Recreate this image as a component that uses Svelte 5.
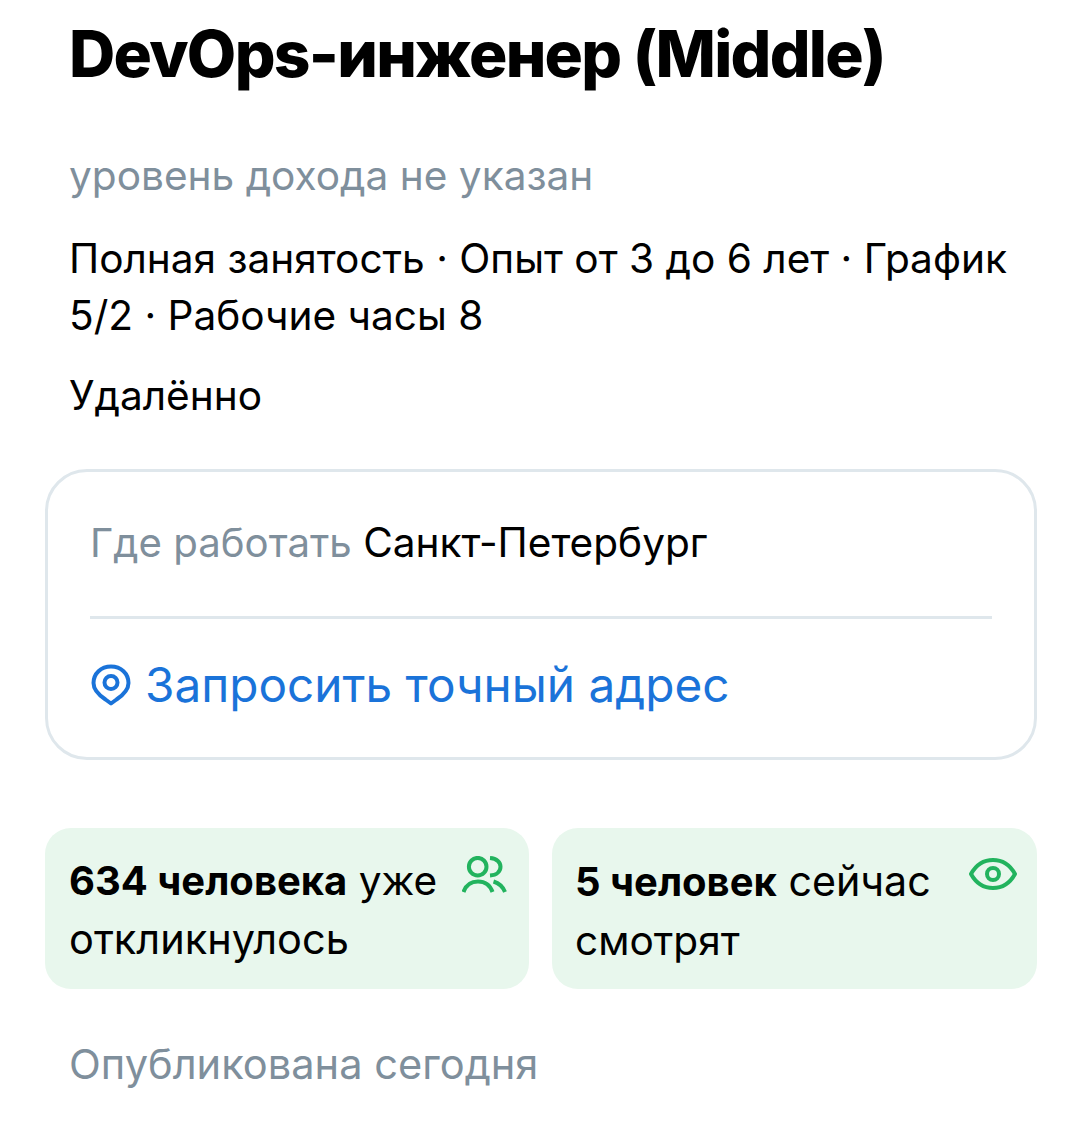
<script>
  const stats = [
    { strong: '634 человека', rest: ' уже', line2: 'откликнулось', icon: 'people' },
    { strong: '5 человек', rest: ' сейчас', line2: 'смотрят', icon: 'eye' }
  ];
</script>

<main class="page">
  <div class="inset">
    <h1>DevOps-инженер (Middle)</h1>
    <p class="salary">уровень дохода не указан</p>
    <p class="terms">Полная занятость · Опыт от 3 до 6 лет · График<br />5/2 · Рабочие часы 8</p>
    <p class="remote">Удалённо</p>
  </div>

  <section class="card">
    <div class="where"><span class="muted">Где работать</span> Санкт-Петербург</div>
    <div class="rule"></div>
    <div class="address">
      <svg width="42" height="42" viewBox="0 0 42 42" fill="none" stroke="#1a73d9" stroke-width="4">
        <path d="M21 39.5 L15.5 35.5 C8 30.5 3.5 26 3.5 19 C3.5 9.5 11 2.5 21 2.5 C31 2.5 38.5 9.5 38.5 19 C38.5 26 34 30.5 26.5 35.5 Z" stroke-linejoin="round" />
        <circle cx="21" cy="18.5" r="6.5" />
      </svg>
      <span>Запросить точный адрес</span>
    </div>
  </section>

  <section class="stats">
    {#each stats as s}
      <div class="stat" class:second={s.icon === 'eye'}>
        <div class="stat-text"><b>{s.strong}</b>{s.rest}<br /><span class="line2">{s.line2}</span></div>
        {#if s.icon === 'people'}
          <svg class="icon-people" width="46" height="40" viewBox="0 0 46 40" fill="none" stroke="#22b35e" stroke-width="4">
            <circle cx="15.7" cy="10.7" r="8.8" />
            <path d="M28 2 C35 2.5 38.5 6.5 38.5 10.7 C38.5 15 35 19 28 19.5" />
            <path d="M1.5 36 C4 29 9 25.5 16 25.5 C23 25.5 28 29 30.5 36" />
            <path d="M31.5 25.5 C36.5 27 41 31 43 36" />
          </svg>
        {:else}
          <svg class="icon-eye" width="48" height="32" viewBox="0 0 48 32" fill="none" stroke="#22b35e" stroke-width="4">
            <path d="M2 16 C7 7 14 2 24 2 C34 2 41 7 46 16 C41 25 34 30 24 30 C14 30 7 25 2 16 Z" stroke-linejoin="round" />
            <circle cx="24" cy="16" r="6" />
          </svg>
        {/if}
      </div>
    {/each}
  </section>

  <p class="published">Опубликована сегодня</p>
</main>

<style>
  :global(body) {
    margin: 0;
    background: #fff;
  }
  .page {
    width: 1080px;
    height: 1124px;
    box-sizing: border-box;
    overflow: hidden;
    padding: 16px 43px 0 45px;
    font-family: Inter, "Liberation Sans", Arial, sans-serif;
    font-size: 40.6px;
    color: #000;
  }
  .inset {
    padding-left: 24px;
  }
  h1 {
    margin: 0;
    font-size: 64px;
    line-height: 76px;
    font-weight: 800;
    letter-spacing: -1.7px;
    color: #000;
  }
  p {
    margin: 0;
  }
  .salary {
    margin-top: 55px;
    line-height: 58px;
    color: #7f8f9c;
  }
  .terms {
    margin-top: 25px;
    line-height: 57px;
  }
  .remote {
    margin-top: 23px;
    line-height: 58px;
  }
  .card {
    margin-top: 44px;
    height: 291px;
    box-sizing: border-box;
    border: 3px solid #dfe7ec;
    border-radius: 42px;
    padding: 42px 42px 0;
  }
  .where {
    line-height: 58px;
  }
  .muted {
    font-size: 40.2px;
    color: #7f8f9c;
  }
  .rule {
    height: 3px;
    margin-top: 44px;
    background: #dfe7ec;
  }
  .address {
    display: flex;
    align-items: center;
    gap: 13px;
    margin-top: 37px;
    font-size: 47.7px;
    line-height: 58px;
    color: #1a73d9;
  }
  .stats {
    display: grid;
    grid-template-columns: 484px 485px;
    gap: 23px;
    margin-top: 68px;
  }
  .stat {
    position: relative;
    height: 161px;
    box-sizing: border-box;
    background: #e8f7ed;
    border-radius: 26px;
    padding: 24px 23px 0 24px;
    line-height: 58px;
  }
  .stat.second {
    padding-left: 23px;
    font-size: 41.2px;
  }
  .stat b {
    font-size: 40px;
    font-weight: 700;
  }
  .line2 {
    font-size: 41.5px;
  }
  .second .line2 {
    font-size: 40.6px;
  }
  .icon-people {
    position: absolute;
    top: 28px;
    right: 21px;
  }
  .icon-eye {
    position: absolute;
    top: 30px;
    right: 20px;
  }
  .published {
    margin: 46px 0 0 24px;
    font-size: 41.6px;
    line-height: 58px;
    color: #7f8f9c;
  }
</style>
